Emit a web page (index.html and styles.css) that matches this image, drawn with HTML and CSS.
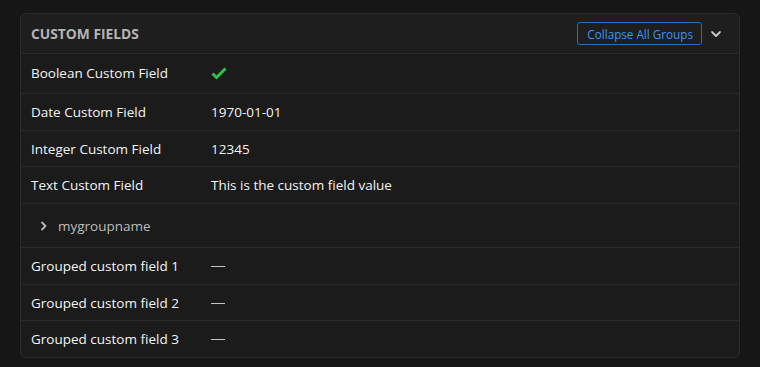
FILE: index.html
```html
<!DOCTYPE html>
<html>
<head>
<meta charset="utf-8">
<link rel="stylesheet" href="styles.css">
</head>
<body>
<div class="card">
  <div class="card-header">
    <div class="title">CUSTOM FIELDS</div>
    <div class="actions">
      <button class="btn-outline">Collapse All Groups</button>
      <svg class="chev" width="12" height="12" viewBox="0 0 12 12"><path d="M2 4 L6 8 L10 4" fill="none" stroke="#c8c8c8" stroke-width="1.8" stroke-linecap="round" stroke-linejoin="round"/></svg>
    </div>
  </div>
  <div class="row first">
    <div class="label">Boolean Custom Field</div>
    <div class="value"><svg width="16" height="14" viewBox="0 0 16 14"><path d="M1.5 7.5 L5.5 11.5 L14.5 2.5" fill="none" stroke="#2ec24a" stroke-width="3"/></svg></div>
  </div>
  <div class="row">
    <div class="label">Date Custom Field</div>
    <div class="value">1970-01-01</div>
  </div>
  <div class="row short">
    <div class="label">Integer Custom Field</div>
    <div class="value">12345</div>
  </div>
  <div class="row">
    <div class="label">Text Custom Field</div>
    <div class="value">This is the custom field value</div>
  </div>
  <div class="row group">
    <svg class="gchev" width="10" height="10" viewBox="0 0 10 10"><path d="M3 1.5 L6.5 5 L3 8.5" fill="none" stroke="#b8b8b8" stroke-width="1.8" stroke-linecap="round" stroke-linejoin="round"/></svg>
    <div class="gname">mygroupname</div>
  </div>
  <div class="row">
    <div class="label">Grouped custom field 1</div>
    <div class="value"><span class="dash"></span></div>
  </div>
  <div class="row short">
    <div class="label">Grouped custom field 2</div>
    <div class="value"><span class="dash"></span></div>
  </div>
  <div class="row last">
    <div class="label">Grouped custom field 3</div>
    <div class="value"><span class="dash"></span></div>
  </div>
</div>
</body>
</html>
```
FILE: styles.css
```css
html, body {
  margin: 0;
  padding: 0;
  background: #161616;
}
body {
  padding: 13px 20px 0 20px;
  font-family: "Open Sans", "Noto Sans", sans-serif;
  font-size: 13.5px;
  color: #f4f4f4;
}
.card {
  width: 718px;
  background: #1b1b1b;
  border: 1px solid #2a2a2a;
  border-radius: 5px;
  overflow: hidden;
}
.card-header {
  display: flex;
  align-items: center;
  justify-content: space-between;
  height: 39px;
  padding: 0 17px 0 10px;
  background: #1e1e1e;
  border-bottom: 1px solid #2a2a2a;
}
.title {
  font-weight: 700;
  font-size: 13.8px;
  color: #b4b4b4;
}
.actions {
  display: flex;
  align-items: center;
  gap: 8px;
}
.btn-outline {
  font-family: inherit;
  font-size: 11.7px;
  color: #3d95f5;
  background: transparent;
  border: 1px solid #2a6db0;
  border-radius: 3px;
  height: 23px;
  padding: 0 8px 0 9px;
}
.chev { display: block; }
.row {
  display: flex;
  align-items: center;
  height: 36px;
  padding: 0 10px;
  border-bottom: 1px solid #2a2a2a;
}
.row.first { height: 39px; padding-top: 0; padding-bottom: 2px; height: 37px; }
.row.short { height: 35px; }
.row.last { border-bottom: none; }
.label {
  width: 180px;
  flex: none;
}
.value svg { display: block; }
.dash {
  display: block;
  width: 14px;
  height: 1px;
  background: #c4c4c4;
  margin-top: 1px;
}
.row.group {
  height: 43px;
  padding-left: 18px;
  gap: 9px;
}
.gchev { display: block; }
.gname { color: #bdbdbd; }
```
